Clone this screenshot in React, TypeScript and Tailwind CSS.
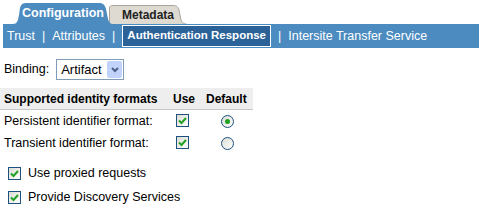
import React from "react";

const font = { fontFamily: '"Liberation Sans", Arial, sans-serif' };

const Check = () => (
  <span className="inline-flex h-[13px] w-[13px] items-center justify-center border border-[#1c5180] bg-gradient-to-br from-[#dcdcd5] to-white">
    <svg width="9" height="9" viewBox="0 0 9 9">
      <path d="M1 4.5 L3.5 7 L8 2" stroke="#21a121" strokeWidth="2" fill="none" />
    </svg>
  </span>
);

const Radio = ({ checked }: { checked?: boolean }) => (
  <span className="inline-flex h-[13px] w-[13px] items-center justify-center rounded-full border border-[#1c5180] bg-gradient-to-br from-[#dcdcd5] to-white">
    {checked && <span className="h-[5px] w-[5px] rounded-full bg-[#21a121]" />}
  </span>
);

const Sep = () => <span className="px-[7px]">|</span>;

export default function App() {
  return (
    <div className="w-[479px] h-[223px] bg-white text-[12.5px] text-black" style={font}>
      {/* tabs */}
      <div className="flex h-[24px] items-end pl-[13px] pt-[3px]">
        <div className="relative z-10 flex h-[21px] w-[100px] items-center justify-center">
          <svg className="absolute inset-0" width="100" height="21" viewBox="0 0 100 21">
            <path d="M0 21 C4 21 5 18 6 12 L7 5 C8 1 10 0 14 0 L86 0 C90 0 92 2 93 6 L95 16 C96 20 98 21 100 21 Z" fill="#4b8bbf" />
          </svg>
          <span className="relative font-bold text-[12.5px] text-white">Configuration</span>
        </div>
        <div className="relative -ml-[4px] flex h-[19px] w-[78px] items-center justify-center">
          <svg className="absolute inset-0" width="78" height="19" viewBox="0 0 78 19">
            <path d="M0.5 19 L0.5 3 C0.5 1 2 0.5 4 0.5 L64 0.5 C68 0.5 69 2 70 5 L72 15 C73 18 75 19 77.5 19" fill="#dedad2" stroke="#a9a59d" />
          </svg>
          <span className="relative font-bold text-[12px] text-[#222]">Metadata</span>
        </div>
      </div>
      {/* sub nav */}
      <div className="ml-[3px] flex h-[24px] items-center bg-[#4b8bbf] pl-[4px] text-white">
        <span>Trust</span>
        <Sep />
        <span>Attributes</span>
        <Sep />
        <span className="border border-white bg-[#2b6298] px-[4px] py-[1px] text-[11.5px] font-bold">
          Authentication Response
        </span>
        <Sep />
        <span>Intersite Transfer Service</span>
      </div>
      {/* binding */}
      <div className="mt-[11px] flex items-center pl-[4px]">
        <span>Binding:</span>
        <div className="ml-[7px] flex h-[21px] w-[68px] items-center justify-between border border-[#7f9db9] pl-[4px] pr-[1px]">
          <span className="text-[13px]">Artifact</span>
          <span className="flex h-[17px] w-[15px] items-center justify-center rounded-[2px] bg-[#c1d3fb]">
            <svg width="8" height="6" viewBox="0 0 8 6">
              <path d="M1 1 L4 4 L7 1" stroke="#4d6185" strokeWidth="2" fill="none" />
            </svg>
          </span>
        </div>
      </div>
      {/* table */}
      <div className="mt-[8px] w-[253px]">
        <div className="flex h-[22px] items-center border-b border-[#c8c8c8] bg-[#eeeeee] pl-[4px] text-[12px] font-bold">
          <span className="w-[169px]">Supported identity formats</span>
          <span className="w-[33px]">Use</span>
          <span>Default</span>
        </div>
        <div className="flex h-[22px] items-center pl-[4px] pt-[1px]">
          <span className="w-[172px]">Persistent identifier format:</span>
          <span className="w-[45px]"><Check /></span>
          <Radio checked />
        </div>
        <div className="flex h-[22px] items-center pl-[4px]">
          <span className="w-[172px]">Transient identifier format:</span>
          <span className="w-[45px]"><Check /></span>
          <Radio />
        </div>
      </div>
      <div className="mt-[10px] flex flex-col gap-[5px] pl-[8px]">
        <div className="flex items-center gap-[7px]">
          <Check />
          <span>Use proxied requests</span>
        </div>
        <div className="flex items-center gap-[7px]">
          <Check />
          <span>Provide Discovery Services</span>
        </div>
      </div>
    </div>
  );
}
